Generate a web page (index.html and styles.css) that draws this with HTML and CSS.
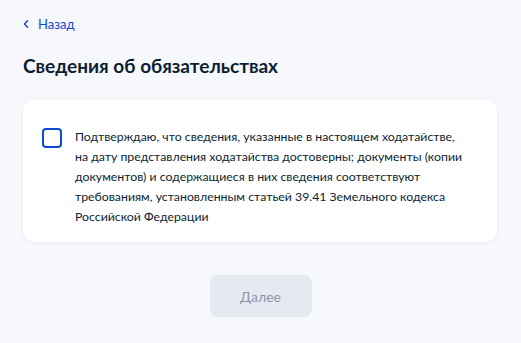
FILE: index.html
```html
<!DOCTYPE html>
<html lang="ru">

<head>
    <meta charset="UTF-8">
    <meta name="viewport" content="width=device-width, initial-scale=1.0">
    <title>Сведения об обязательствах</title>
    <link rel="stylesheet" href="styles.css">
</head>

<body>
    <div class="page">
        <div class="back-row">
            <a class="back" href="#">
                <svg class="back-icon" width="6" height="8" viewBox="0 0 6 8">
                    <path d="M4.5 0.8 L1.5 4 L4.5 7.2" fill="none" stroke="#0d4cd3" stroke-width="1.5"
                        stroke-linecap="round" stroke-linejoin="round" />
                </svg>
                Назад
            </a>
        </div>

        <h1 class="title">Сведения об обязательствах</h1>

        <div class="card">
            <label class="confirm">
                <span class="checkbox"></span>
                <span class="confirm-text">Подтверждаю, что сведения, указанные в настоящем ходатайстве, на&nbsp;дату
                    представления ходатайства достоверны; документы (копии документов) и содержащиеся в них сведения
                    соответствуют требованиям, установленным статьей 39.41 Земельного кодекса Российской
                    Федерации</span>
            </label>
        </div>

        <div class="actions">
            <button class="next" disabled>Далее</button>
        </div>
    </div>
</body>

</html>
```

FILE: styles.css
```css
body {
    font-family: Lato, "Liberation Sans", sans-serif;
    margin: 0;
    padding: 0;
    background-color: #f6f8fc;
    color: #0b1f33;
}

.page {
    padding: 15px 24px 0 23px;
}

.back-row {
    display: flex;
    height: 18px;
}

.back {
    display: flex;
    align-items: center;
    gap: 9px;
    font-size: 13px;
    line-height: 18px;
    color: #0d4cd3;
    text-decoration: none;
}

.title {
    margin: 19px 0 0;
    font-size: 19px;
    line-height: 28px;
    font-weight: 700;
}

.card {
    margin-top: 20px;
    width: 474px;
    box-sizing: border-box;
    padding: 27px 8px 15px 19px;
    background-color: #ffffff;
    border-radius: 12px;
    box-shadow: 0 1px 4px rgba(12, 40, 120, 0.06);
}

.confirm {
    display: flex;
    align-items: flex-start;
    gap: 13px;
}

.checkbox {
    flex: none;
    width: 20px;
    height: 20px;
    margin-top: 1px;
    box-sizing: border-box;
    border: 2px solid #0d4cd3;
    border-radius: 4px;
}

.confirm-text {
    font-size: 12.3px;
    line-height: 20px;
}

.actions {
    display: flex;
    justify-content: center;
    margin-top: 33px;
    margin-right: -24px;
    margin-left: -23px;
}

.next {
    width: 102px;
    height: 42px;
    font-family: Lato, "Liberation Sans", sans-serif;
    font-size: 14px;
    color: #8d96a7;
    background-color: #e4e9f2;
    border: none;
    border-radius: 8px;
}
```
